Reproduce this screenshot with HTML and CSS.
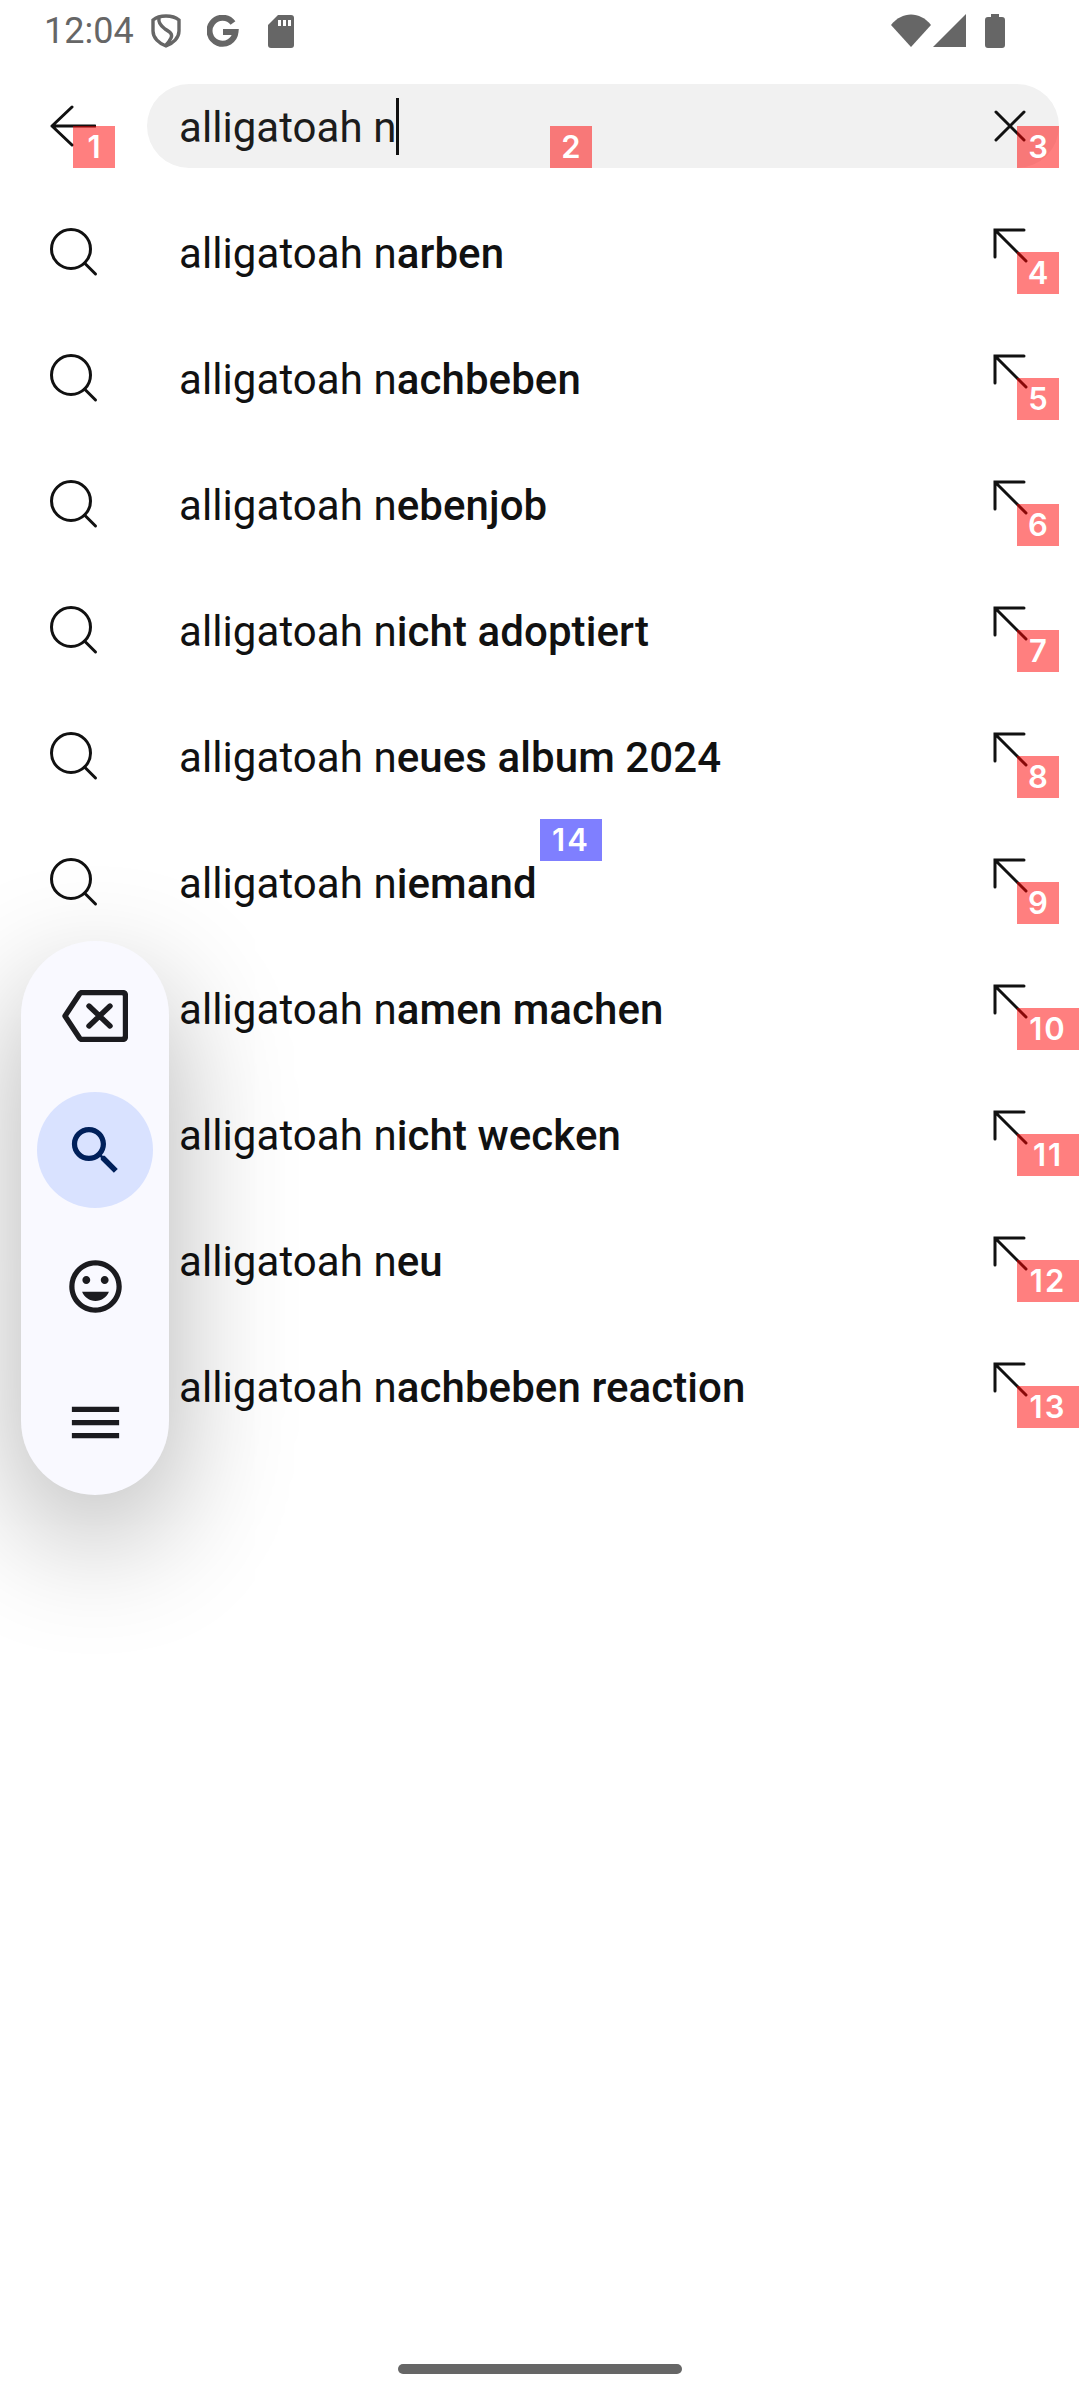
FILE: index.html
```html
<!DOCTYPE html>
<html lang="en">
<head>
  <meta charset="UTF-8" />
  <meta name="viewport" content="width=device-width, initial-scale=1.0"/>
  <title>Search suggestions</title>
  <link rel="stylesheet" href="styles.css">
</head>
<body>

<svg class="sprite" width="0" height="0">
  <symbol id="i-search" viewBox="0 0 50 50">
    <circle cx="21" cy="21" r="19.5" fill="none" stroke="currentColor" stroke-width="3"/>
    <path d="M34.5 35 L45.5 46" fill="none" stroke="currentColor" stroke-width="3" stroke-linecap="round"/>
  </symbol>
  <symbol id="i-fill" viewBox="0 0 40 40">
    <path d="M5 32 V5 H34 M5 5 L36 36" fill="none" stroke="currentColor" stroke-width="3" stroke-linecap="round"/>
  </symbol>
</svg>

<div class="screen">
  <div class="status-bar">
    <span class="time">12:04</span>
    <svg class="st-shield" viewBox="0 0 30 34"><path d="M15 2 C20 2 25 3.5 28 6 V17 C28 24 22 29.5 15 32 C8 29.5 2 24 2 17 V6 C5 3.5 10 2 15 2 Z M8 4 C7 9 10 12 14 15 C19 18 22 20 20 24 C19 26 17 29 15 31" fill="none" stroke="#666" stroke-width="3.4"/></svg>
    <svg class="st-g" viewBox="0 0 32 32"><path d="M26 8 A13 13 0 1 0 28.5 17 H16" fill="none" stroke="#666" stroke-width="6"/></svg>
    <svg class="st-sd" viewBox="0 0 26 33"><path d="M10 0 H23 Q26 0 26 3 V30 Q26 33 23 33 H3 Q0 33 0 30 V10 Z" fill="#666"/><path d="M10 5 H13 V11 H10 Z M15 5 H18 V11 H15 Z M20 5 H23 V11 H20 Z" fill="#fff"/></svg>
    <span class="st-spacer"></span>
    <svg class="st-wifi" viewBox="0 0 40 33"><path d="M0 11 C11 -3 29 -3 40 11 L20 33 Z" fill="#666"/></svg>
    <svg class="st-signal" viewBox="0 0 33 33"><path d="M33 0 V33 H0 Z" fill="#666"/></svg>
    <svg class="st-battery" viewBox="0 0 20 34"><path d="M6 0 H14 V3 H17 Q20 3 20 6 V31 Q20 34 17 34 H3 Q0 34 0 31 V6 Q0 3 3 3 H6 Z" fill="#666"/></svg>
  </div>

  <div class="search-row">
    <svg class="back-icon" viewBox="0 0 46 42"><path d="M22 2 L2 21 L22 40 M2 21 H45" fill="none" stroke="#111" stroke-width="3" stroke-linecap="round" stroke-linejoin="round"/></svg>
    <div class="search-box">
      <span class="query">alligatoah n</span><span class="caret"></span>
      <svg class="clear-icon" viewBox="0 0 32 32"><path d="M2 2 L30 30 M30 2 L2 30" fill="none" stroke="#111" stroke-width="3" stroke-linecap="round"/></svg>
    </div>
    <span class="badge badge-back">1</span>
    <span class="badge badge-input">2</span>
    <span class="badge badge-end">3</span>
  </div>

  <div class="suggestions">
    <div class="row">
      <svg class="row-icon"><use href="#i-search"/></svg>
      <span class="row-text">alligatoah n<b>arben</b></span>
      <svg class="fill-icon"><use href="#i-fill"/></svg>
      <span class="badge badge-end">4</span>
    </div>
    <div class="row">
      <svg class="row-icon"><use href="#i-search"/></svg>
      <span class="row-text">alligatoah n<b>achbeben</b></span>
      <svg class="fill-icon"><use href="#i-fill"/></svg>
      <span class="badge badge-end">5</span>
    </div>
    <div class="row">
      <svg class="row-icon"><use href="#i-search"/></svg>
      <span class="row-text">alligatoah n<b>ebenjob</b></span>
      <svg class="fill-icon"><use href="#i-fill"/></svg>
      <span class="badge badge-end">6</span>
    </div>
    <div class="row">
      <svg class="row-icon"><use href="#i-search"/></svg>
      <span class="row-text">alligatoah n<b>icht adoptiert</b></span>
      <svg class="fill-icon"><use href="#i-fill"/></svg>
      <span class="badge badge-end">7</span>
    </div>
    <div class="row">
      <svg class="row-icon"><use href="#i-search"/></svg>
      <span class="row-text">alligatoah n<b>eues album 2024</b></span>
      <svg class="fill-icon"><use href="#i-fill"/></svg>
      <span class="badge badge-end">8</span>
    </div>
    <div class="row">
      <svg class="row-icon"><use href="#i-search"/></svg>
      <span class="row-text">alligatoah n<b>iemand</b></span>
      <svg class="fill-icon"><use href="#i-fill"/></svg>
      <span class="badge badge-end">9</span>
      <span class="badge badge-blue">14</span>
    </div>
    <div class="row">
      <svg class="row-icon"><use href="#i-search"/></svg>
      <span class="row-text">alligatoah n<b>amen machen</b></span>
      <svg class="fill-icon"><use href="#i-fill"/></svg>
      <span class="badge badge-end badge-wide">10</span>
    </div>
    <div class="row">
      <svg class="row-icon"><use href="#i-search"/></svg>
      <span class="row-text">alligatoah n<b>icht wecken</b></span>
      <svg class="fill-icon"><use href="#i-fill"/></svg>
      <span class="badge badge-end badge-wide">11</span>
    </div>
    <div class="row">
      <svg class="row-icon"><use href="#i-search"/></svg>
      <span class="row-text">alligatoah n<b>eu</b></span>
      <svg class="fill-icon"><use href="#i-fill"/></svg>
      <span class="badge badge-end badge-wide">12</span>
    </div>
    <div class="row">
      <svg class="row-icon"><use href="#i-search"/></svg>
      <span class="row-text">alligatoah n<b>achbeben reaction</b></span>
      <svg class="fill-icon"><use href="#i-fill"/></svg>
      <span class="badge badge-end badge-wide">13</span>
    </div>
  </div>

  <div class="home-area"><div class="home-bar"></div></div>

  <!-- floating keyboard toolbar -->
  <div class="float-pill">
    <div class="pill-item">
      <svg class="pill-backspace" viewBox="0 0 66 52"><path d="M20 2.5 H60 Q63.5 2.5 63.5 6 V46 Q63.5 49.5 60 49.5 H20 Q18.5 49.5 17.5 48 L3 26 L17.5 4 Q18.5 2.5 20 2.5 Z M27 16 L48 36 M48 16 L27 36" fill="none" stroke="#1b1b1f" stroke-width="5.4" stroke-linecap="round" stroke-linejoin="round"/></svg>
    </div>
    <div class="pill-item active">
      <svg class="pill-icon" viewBox="0 0 24 24"><path fill="#00205a" d="M15.5 14h-.79l-.28-.27C15.41 12.59 16 11.11 16 9.5 16 5.91 13.09 3 9.5 3S3 5.91 3 9.5 5.91 16 9.5 16c1.61 0 3.09-.59 4.23-1.57l.27.28v.79l5 4.99L20.49 19l-4.99-5zm-6 0C7.01 14 5 11.99 5 9.5S7.01 5 9.5 5 14 7.01 14 9.5 11.99 14 9.5 14z"/></svg>
    </div>
    <div class="pill-item">
      <svg class="pill-icon pill-mood" viewBox="0 0 24 24"><path fill="#1b1b1f" d="M11.99 2C6.47 2 2 6.48 2 12s4.47 10 9.99 10C17.52 22 22 17.52 22 12S17.52 2 11.99 2zM12 20c-4.42 0-8-3.58-8-8s3.58-8 8-8 8 3.58 8 8-3.58 8-8 8zm3.5-9c.83 0 1.5-.67 1.5-1.5S16.33 8 15.5 8 14 8.67 14 9.5s.67 1.5 1.5 1.5zm-7 0c.83 0 1.5-.67 1.5-1.5S9.33 8 8.5 8 7 8.67 7 9.5 7.67 11 8.5 11zm3.5 6.5c2.33 0 4.31-1.46 5.11-3.5H6.89c.8 2.04 2.78 3.5 5.11 3.5z"/></svg>
    </div>
    <div class="pill-item">
      <svg class="pill-icon pill-menu" viewBox="0 0 24 24"><path fill="#1b1b1f" d="M3 18h18v-2H3v2zm0-5h18v-2H3v2zm0-7v2h18V6H3z"/></svg>
    </div>
  </div>
</div>

</body>
</html>
```

FILE: styles.css
```css
* {
  box-sizing: border-box;
}

body {
  margin: 0;
  background-color: #fff;
  font-family: Roboto, sans-serif;
  color: #111;
}

.sprite {
  position: absolute;
}

.screen {
  position: relative;
  width: 1080px;
  height: 2400px;
  overflow: hidden;
  display: flex;
  flex-direction: column;
}

/* status bar */
.status-bar {
  height: 63px;
  padding: 0 75px 0 44px;
  display: flex;
  align-items: flex-start;
}

.time {
  font-size: 36px;
  line-height: 62px;
  color: #666;
  margin-right: 17px;
}

.st-shield {
  width: 30px;
  height: 34px;
  margin: 14px 26px 0 0;
}

.st-g {
  width: 32px;
  height: 32px;
  margin: 15px 29px 0 0;
}

.st-sd {
  width: 26px;
  height: 33px;
  margin-top: 15px;
}

.st-spacer {
  flex: 1;
}

.st-wifi {
  width: 40px;
  height: 33px;
  margin: 14px 2px 0 0;
}

.st-signal {
  width: 33px;
  height: 33px;
  margin: 14px 19px 0 0;
}

.st-battery {
  width: 20px;
  height: 34px;
  margin-top: 14px;
}

/* search field */
.search-row {
  position: relative;
  height: 126px;
  padding: 0 21px 0 50px;
  display: flex;
  align-items: center;
}

.back-icon {
  width: 46px;
  height: 42px;
  margin-right: 51px;
}

.search-box {
  flex: 1;
  height: 84px;
  border-radius: 42px;
  background-color: #f1f1f1;
  padding: 0 33px 0 32px;
  display: flex;
  align-items: center;
}

.query {
  font-size: 42px;
  letter-spacing: 0.05px;
  color: #1c1c1c;
  white-space: pre;
  padding-top: 2px;
}

.caret {
  width: 3px;
  height: 57px;
  background-color: #111;
}

.clear-icon {
  width: 32px;
  height: 32px;
  margin-left: auto;
}

/* suggestion list */
.row {
  position: relative;
  height: 126px;
  padding: 0 50px 0 50px;
  display: flex;
  align-items: center;
}

.row-icon {
  width: 50px;
  height: 50px;
  margin-right: 79px;
  margin-top: 1px;
}

.row-text {
  flex: 1;
  font-size: 42px;
  letter-spacing: 0.08px;
  color: #111;
  padding-top: 2px;
}

.row-text b {
  font-weight: 500;
}

.fill-icon {
  width: 40px;
  height: 40px;
  margin-top: -14px;
}

/* element markers */
.badge {
  position: absolute;
  top: 63px;
  left: 1017px;
  width: 42px;
  height: 42px;
  background-color: rgba(255, 0, 0, 0.5);
  color: #fff;
  font-family: Inter, sans-serif;
  font-size: 31px;
  font-weight: 600;
  line-height: 42px;
  text-align: center;
}

.badge-wide {
  width: 62px;
  letter-spacing: 2px;
}

.badge-back {
  left: 73px;
}

.badge-input {
  left: 550px;
}

.badge-blue {
  top: 0;
  left: 540px;
  width: 62px;
  letter-spacing: 2px;
  background-color: rgba(0, 0, 255, 0.5);
}

/* floating toolbar */
.float-pill {
  position: absolute;
  top: 941px;
  left: 21px;
  width: 148px;
  height: 554px;
  padding: 16px 16px 15px;
  border-radius: 74px;
  background-color: #f9f9ff;
  box-shadow: 0 42px 125px rgba(0, 0, 0, 0.3);
  display: flex;
  flex-direction: column;
  gap: 19px;
}

.pill-item {
  width: 116px;
  height: 116px;
  border-radius: 50%;
  flex: none;
  display: flex;
  align-items: center;
  justify-content: center;
}

.pill-item.active {
  background-color: #d9e2ff;
}

.pill-icon {
  width: 63px;
  height: 63px;
}

.pill-mood {
  margin-top: 3px;
}

.pill-menu {
  margin-top: 4px;
}

.pill-backspace {
  width: 66px;
  height: 52px;
  margin-top: 2px;
}

/* gesture bar */
.home-area {
  margin-top: auto;
  padding-bottom: 26px;
  display: flex;
  justify-content: center;
}

.home-bar {
  width: 284px;
  height: 10px;
  border-radius: 5px;
  background-color: #666;
}
```
